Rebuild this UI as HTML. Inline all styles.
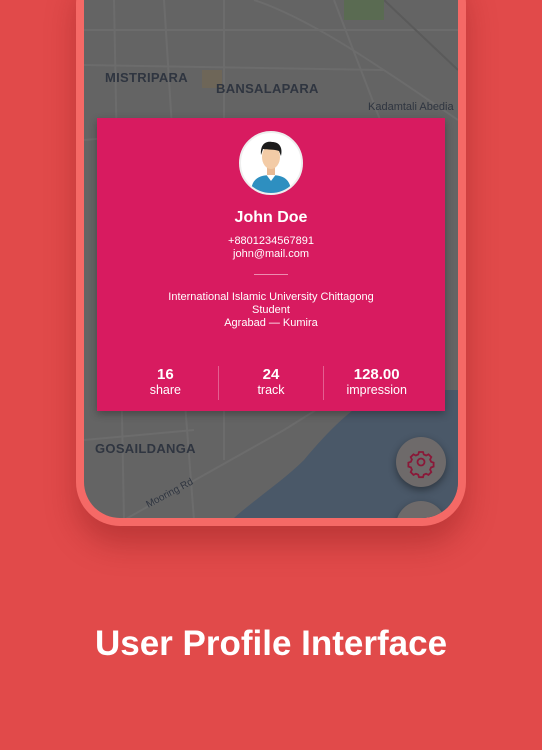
<!DOCTYPE html>
<html><head><style>
*{margin:0;padding:0;box-sizing:border-box}
body{width:542px;height:750px;background:#e14a4a;font-family:"Liberation Sans",sans-serif;position:relative;overflow:hidden}
.frame{position:absolute;left:76px;top:-40px;width:390px;height:566px;background:#f56966;border-radius:44px;box-shadow:0 18px 30px rgba(120,20,20,.35)}
.screen{position:absolute;left:84px;top:-40px;width:374px;height:558px;border-radius:36px;overflow:hidden;background:#646464}
.lbl{position:absolute;color:#2f3540;font-weight:bold;font-size:13px;letter-spacing:.3px}
.card{position:absolute;left:97px;top:118px;width:348px;height:293px;background:#d81b60;color:#fff;text-align:center;box-shadow:0 3px 8px rgba(0,0,0,.3)}
.fab{position:absolute;width:50px;height:50px;border-radius:50%;background:#6e6a6a;box-shadow:0 3px 8px rgba(0,0,0,.4)}
</style></head><body>
<div class="frame"></div>
<div class="screen">
<svg width="374" height="558" style="position:absolute;left:0;top:0">
<g stroke="#6c6c6c" stroke-width="2" fill="none">
<path d="M140 40 L140 500"/><path d="M170 40 C230 60 300 110 374 160"/><path d="M0 70 L374 70"/><path d="M0 105 L300 110"/><path d="M250 40 L300 170"/><path d="M0 180 L120 170"/><path d="M0 480 L110 470"/><path d="M40 560 L200 470 L280 420"/>
<path d="M30 40 L40 560"/><path d="M80 40 L90 200"/><path d="M100 430 L110 560"/>
</g>
<path d="M300 40 L374 110" stroke="#5a5a5a" stroke-width="2"/>
<rect x="260" y="40" width="40" height="20" fill="#5a6b52"/>
<path d="M374 430 L300 430 C270 445 245 470 220 500 C200 520 170 540 150 558 L374 558 Z" fill="#4a5868"/>
<rect x="118" y="110" width="20" height="18" fill="#6e6658"/>
</svg>
<div class="lbl" style="left:21px;top:110px">MISTRIPARA</div>
<div class="lbl" style="left:132px;top:121px">BANSALAPARA</div>
<div class="lbl" style="left:11px;top:481px">GOSAILDANGA</div>
<div style="position:absolute;left:284px;top:141px;color:#2f3540;font-size:11px">Kadamtali Abedia</div>
<div style="position:absolute;left:60px;top:528px;color:#2f3540;font-size:10px;transform:rotate(-28deg)">Mooring Rd</div>
<div class="fab" style="left:312px;top:477px"><svg width="50" height="50" viewBox="0 0 50 50"><g fill="none" stroke="#8a1838" stroke-width="1.8"><circle cx="25" cy="25" r="3.5"/><path d="M23 15 h4 l.8 2.5 l2.3 1 l2.4-1.2 l2.8 2.8 l-1.2 2.4 l1 2.3 l2.5 .8 v4 l-2.5 .8 l-1 2.3 l1.2 2.4 l-2.8 2.8 l-2.4-1.2 l-2.3 1 l-.8 2.5 h-4 l-.8-2.5 l-2.3-1 l-2.4 1.2 l-2.8-2.8 l1.2-2.4 l-1-2.3 l-2.5-.8 v-4 l2.5-.8 l1-2.3 l-1.2-2.4 l2.8-2.8 l2.4 1.2 l2.3-1 z"/></g></svg></div>
<div class="fab" style="left:312px;top:541px"></div>
</div>
<div class="card">
<div style="position:absolute;left:142px;top:13px;width:64px;height:64px;border-radius:50%;background:#fff;border:2px solid #eee;overflow:hidden">
<svg width="60" height="60" viewBox="0 0 60 60"><path d="M10 60 C10 46 18 42 30 42 C42 42 50 46 50 60Z" fill="#2e8fc0"/><path d="M24 40 L30 48 L36 40Z" fill="#fff"/><rect x="26" y="32" width="8" height="10" fill="#e9b993"/><ellipse cx="30" cy="24" rx="9" ry="12" fill="#f3cba6"/><path d="M20 22 C19 10 26 8 31 9 C38 9 42 14 40 23 L38 18 C33 16 27 17 22 16Z" fill="#1c1c1c"/></svg>
</div>
<div style="position:absolute;top:91px;width:100%;font-size:16px;font-weight:bold">John Doe</div>
<div style="position:absolute;top:117px;width:100%;font-size:11px;line-height:13px">+8801234567891<br>john@mail.com</div>
<div style="position:absolute;left:157px;top:156px;width:34px;height:1px;background:rgba(255,255,255,.5)"></div>
<div style="position:absolute;top:173px;width:100%;font-size:11px;line-height:13px">International Islamic University Chittagong<br>Student<br>Agrabad — Kumira</div>
<div style="position:absolute;top:248px;left:16px;width:316px;display:flex">
<div style="flex:1"><div style="font-size:15px;font-weight:bold">16</div><div style="font-size:12.5px">share</div></div>
<div style="width:1px;height:34px;background:rgba(255,255,255,.3)"></div>
<div style="flex:1"><div style="font-size:15px;font-weight:bold">24</div><div style="font-size:12.5px">track</div></div>
<div style="width:1px;height:34px;background:rgba(255,255,255,.3)"></div>
<div style="flex:1"><div style="font-size:15px;font-weight:bold">128.00</div><div style="font-size:12.5px">impression</div></div>
</div>
</div>
<div style="position:absolute;top:624px;width:100%;text-align:center;color:#fff;font-size:35px;font-weight:bold">User Profile Interface</div>
</body></html>
